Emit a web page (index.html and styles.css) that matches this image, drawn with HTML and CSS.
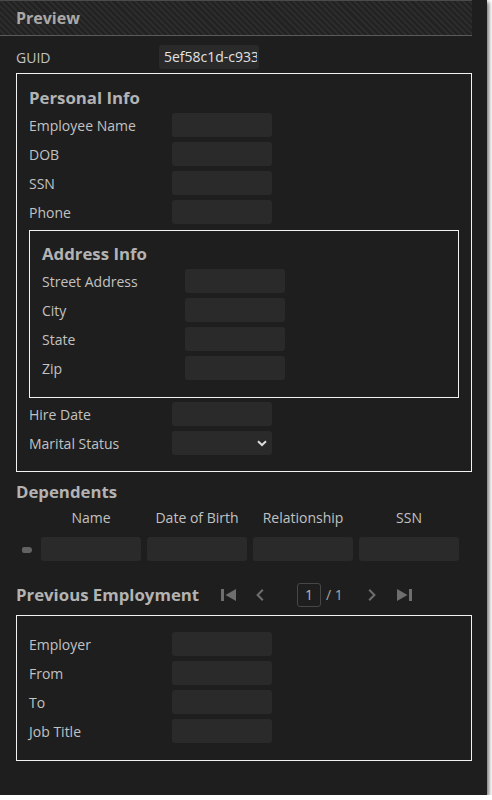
FILE: index.html
```
<!DOCTYPE html>
<html>
<head>
<meta charset="utf-8">
<link rel="stylesheet" href="styles.css">
</head>
<body>
<div class="panel">
  <div class="main">
    <div class="header">Preview</div>
    <div class="content">
      <div class="form-row">
        <div class="label">GUID</div>
        <div class="field guid"><span>5ef58c1d-c933-4e1a-8b2f-6d7c0a9e3f21</span></div>
      </div>

      <div class="group personal">
        <div class="group-title">Personal Info</div>
        <div class="rows">
          <div class="form-row"><div class="label">Employee Name</div><div class="field"></div></div>
          <div class="form-row"><div class="label">DOB</div><div class="field"></div></div>
          <div class="form-row"><div class="label">SSN</div><div class="field"></div></div>
          <div class="form-row"><div class="label">Phone</div><div class="field"></div></div>
        </div>

        <div class="group address">
          <div class="group-title">Address Info</div>
          <div class="rows">
            <div class="form-row"><div class="label">Street Address</div><div class="field"></div></div>
            <div class="form-row"><div class="label">City</div><div class="field"></div></div>
            <div class="form-row"><div class="label">State</div><div class="field"></div></div>
            <div class="form-row"><div class="label">Zip</div><div class="field"></div></div>
          </div>
        </div>

        <div class="rows after-address">
          <div class="form-row"><div class="label">Hire Date</div><div class="field"></div></div>
          <div class="form-row"><div class="label">Marital Status</div>
            <div class="field select">
              <svg class="chev" width="10" height="7" viewBox="0 0 10 7"><path d="M1 1.2 L5 5 L9 1.2" fill="none" stroke="#dcdcdc" stroke-width="2"/></svg>
            </div>
          </div>
        </div>
      </div>

      <div class="section-title dep-title">Dependents</div>
      <div class="dep-grid dep-head">
        <div></div>
        <div class="col-head">Name</div>
        <div class="col-head">Date of Birth</div>
        <div class="col-head">Relationship</div>
        <div class="col-head">SSN</div>
      </div>
      <div class="dep-grid dep-row">
        <div class="indicator-cell"><span class="indicator"></span></div>
        <div class="field"></div>
        <div class="field"></div>
        <div class="field"></div>
        <div class="field"></div>
      </div>

      <div class="emp-head">
        <div class="section-title emp-title">Previous Employment</div>
        <div class="nav-btn">
          <svg width="15" height="12" viewBox="0 0 15 12"><rect x="0" y="0" width="3" height="12" fill="#6e6e6e"/><path d="M15 0 L4.5 6 L15 12 Z" fill="#6e6e6e"/></svg>
        </div>
        <div class="nav-btn">
          <svg width="8" height="12" viewBox="0 0 8 12"><path d="M6.8 0.8 L1.6 6 L6.8 11.2" fill="none" stroke="#6e6e6e" stroke-width="2"/></svg>
        </div>
        <div class="page-box">1</div>
        <div class="page-total">/ 1</div>
        <div class="nav-btn next">
          <svg width="8" height="12" viewBox="0 0 8 12"><path d="M1.2 0.8 L6.4 6 L1.2 11.2" fill="none" stroke="#6e6e6e" stroke-width="2"/></svg>
        </div>
        <div class="nav-btn">
          <svg width="15" height="12" viewBox="0 0 15 12"><path d="M0 0 L10.5 6 L0 12 Z" fill="#6e6e6e"/><rect x="12" y="0" width="3" height="12" fill="#6e6e6e"/></svg>
        </div>
      </div>

      <div class="group employment">
        <div class="rows">
          <div class="form-row"><div class="label">Employer</div><div class="field"></div></div>
          <div class="form-row"><div class="label">From</div><div class="field"></div></div>
          <div class="form-row"><div class="label">To</div><div class="field"></div></div>
          <div class="form-row"><div class="label">Job Title</div><div class="field"></div></div>
        </div>
      </div>
    </div>
  </div>
</div>
</body>
</html>
```
FILE: styles.css
```
html, body {
  margin: 0;
  padding: 0;
  background: #ffffff;
}

body {
  font-family: "Open Sans", "Liberation Sans", sans-serif;
  font-size: 14px;
  color: #c2c2c2;
}

.panel {
  width: 487px;
  height: 795px;
  background: #1e1e1e;
  box-shadow: 2px 2px 4px rgba(0, 0, 0, 0.55);
  display: flex;
  overflow: hidden;
}

.main {
  width: 472px;
}

.header {
  height: 34px;
  border-top: 1px solid #4a4a4a;
  border-bottom: 1px solid #5a5a5a;
  background: repeating-linear-gradient(45deg, #222222 0 2.2px, #2c2c2c 2.2px 4.3px);
  display: flex;
  align-items: center;
  padding-left: 16px;
  font-size: 16px;
  font-weight: 700;
  color: #a9a9a9;
}

.content {
  padding: 9px 0 0 16px;
}

.form-row {
  display: flex;
  align-items: center;
  height: 24px;
}

.label {
  width: 143px;
  flex: none;
  padding-top: 1px;
  line-height: 23px;
  color: #c2c2c2;
  white-space: nowrap;
}

.field {
  width: 100px;
  height: 24px;
  flex: none;
  background: #2a2a2a;
  border-radius: 3px;
  box-sizing: border-box;
}

.guid {
  padding: 0 2px 0 5px;
  line-height: 24px;
  color: #e2e2e2;
}

.guid span {
  display: block;
  overflow: hidden;
  white-space: nowrap;
}

.rows {
  display: flex;
  flex-direction: column;
  gap: 5px;
}

.group {
  border: 1px solid #f2f2f2;
}

.group-title {
  font-size: 16.8px;
  font-weight: 700;
  line-height: 24px;
  color: #b3b3b3;
  margin-bottom: 3px;
  white-space: nowrap;
}

.personal {
  margin-top: 4px;
  padding: 12px 12px 16px;
}

.address {
  margin-top: 6px;
  padding: 11px 12px 17px;
}

.after-address {
  margin-top: 4px;
}

.select {
  display: flex;
  align-items: center;
  justify-content: flex-end;
  padding-right: 5px;
}

.chev {
  display: block;
}

.section-title {
  font-size: 16.8px;
  font-weight: 700;
  line-height: 24px;
  color: #b3b3b3;
}

.dep-title {
  margin-top: 8px;
}

.dep-grid {
  display: grid;
  grid-template-columns: 19px repeat(4, 100px);
  column-gap: 6px;
}

.dep-head {
  margin-top: 4px;
}

.col-head {
  text-align: center;
  line-height: 20px;
  color: #c2c2c2;
  white-space: nowrap;
}

.dep-row {
  margin-top: 9px;
  align-items: center;
}

.indicator-cell {
  display: flex;
  align-items: center;
  height: 24px;
  padding-left: 6px;
}

.indicator {
  display: block;
  width: 10px;
  height: 6px;
  margin-top: 2px;
  border-radius: 2px 3px 3px 2px;
  background: #626262;
}

.emp-head {
  margin-top: 22px;
  display: flex;
  align-items: center;
  height: 24px;
}

.emp-title {
  width: 196px;
  flex: none;
  white-space: nowrap;
}

.nav-btn {
  width: 32px;
  height: 24px;
  flex: none;
  display: flex;
  align-items: center;
  justify-content: center;
}

.nav-btn svg {
  display: block;
}

.page-box {
  margin-left: 21px;
  width: 24px;
  height: 24px;
  box-sizing: border-box;
  border: 1px solid #474747;
  border-radius: 3px;
  text-align: center;
  line-height: 22px;
  color: #b8b8b8;
}

.page-total {
  margin-left: 5px;
  width: 15px;
  line-height: 24px;
  color: #a8a8a8;
  white-space: nowrap;
}

.next {
  margin-left: 15px;
}

.employment {
  margin-top: 8px;
  padding: 16px 12px 17px;
}
```
